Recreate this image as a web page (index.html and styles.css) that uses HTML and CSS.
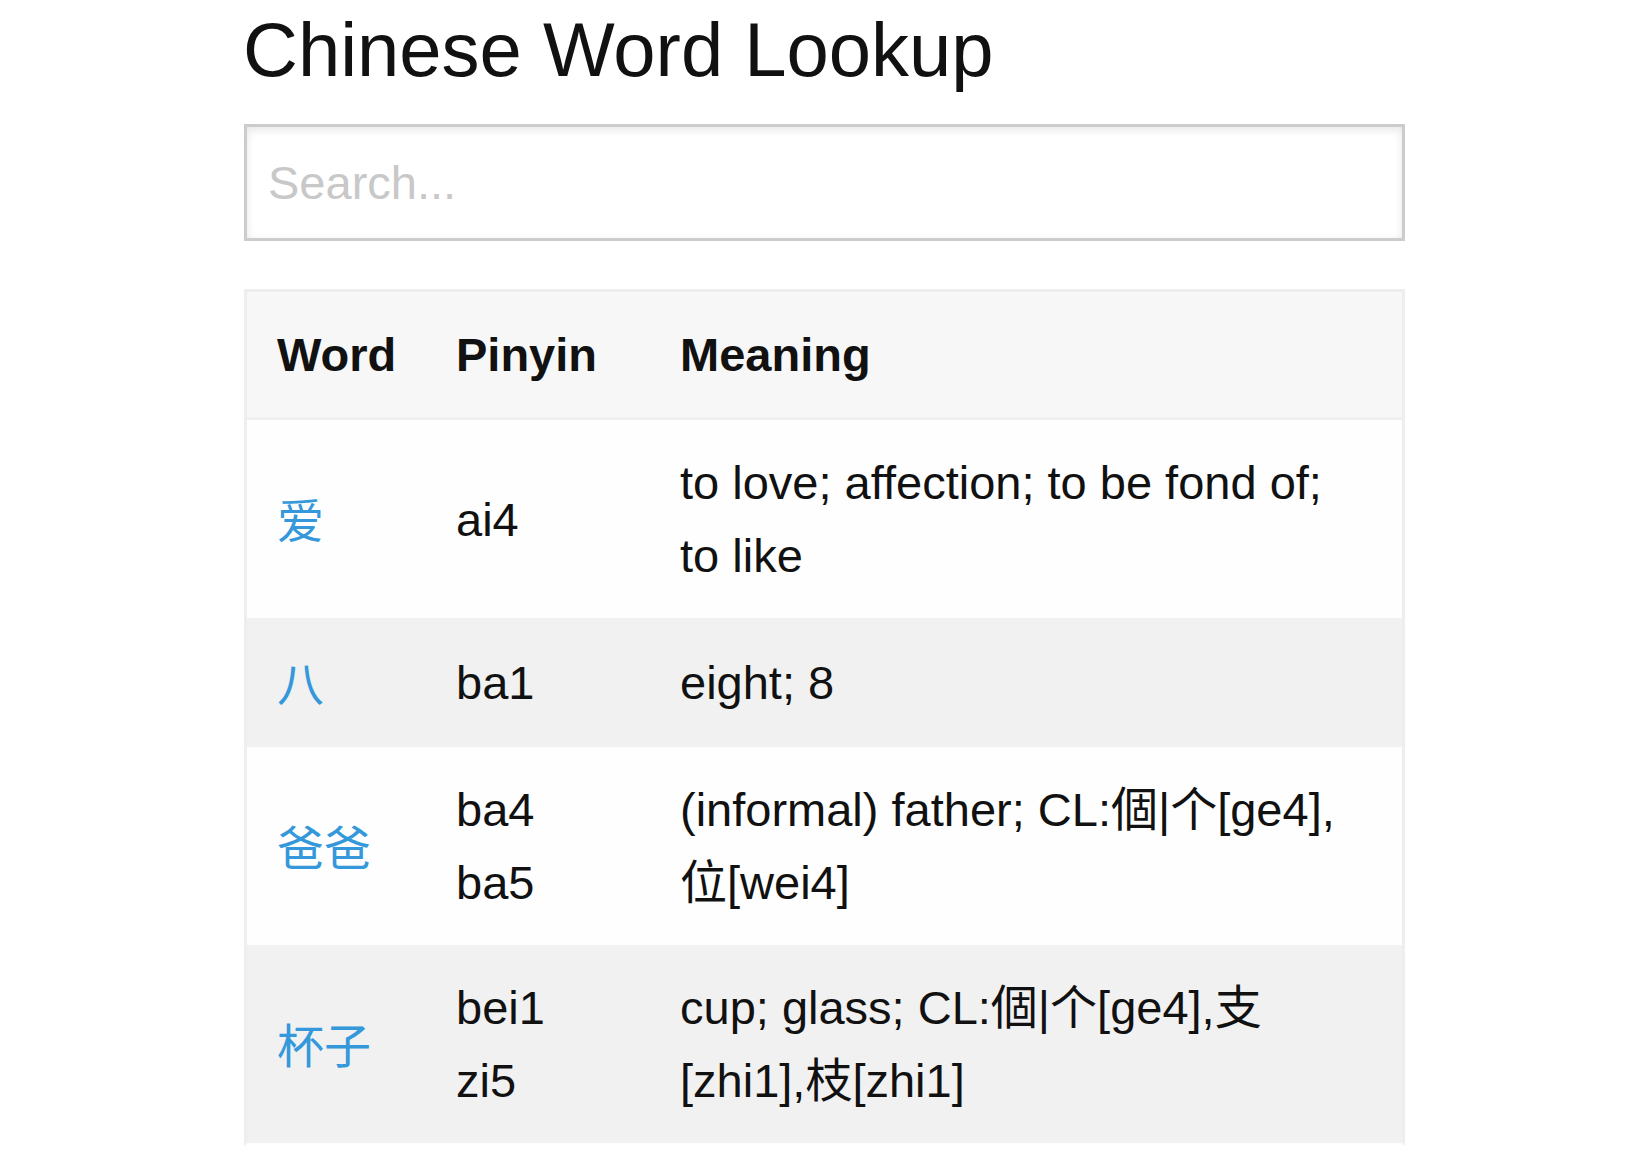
FILE: index.html
```html
<!DOCTYPE html>
<html lang="en">
<head>
<meta charset="utf-8">
<title>Chinese Word Lookup</title>
<link rel="stylesheet" href="styles.css">
</head>
<body>
<div class="page">
  <h1 class="title">Chinese Word Lookup</h1>
  <input class="search" type="text" placeholder="Search...">
  <table class="words">
    <colgroup>
      <col class="col-word">
      <col class="col-pinyin">
      <col class="col-meaning">
    </colgroup>
    <thead>
      <tr><th>Word</th><th>Pinyin</th><th class="meaning">Meaning</th></tr>
    </thead>
    <tbody>
      <tr>
        <td><a class="word" href="#">爱</a></td>
        <td><span class="syl">ai4</span></td>
        <td class="meaning">to love; affection; to be fond of; to like</td>
      </tr>
      <tr class="alt">
        <td><a class="word" href="#">八</a></td>
        <td><span class="syl">ba1</span></td>
        <td class="meaning">eight; 8</td>
      </tr>
      <tr>
        <td><a class="word" href="#">爸爸</a></td>
        <td><span class="syl">ba4</span><span class="syl">ba5</span></td>
        <td class="meaning">(informal) father; CL:個|个[ge4],位[wei4]</td>
      </tr>
      <tr class="alt">
        <td><a class="word" href="#">杯子</a></td>
        <td><span class="syl">bei1</span><span class="syl">zi5</span></td>
        <td class="meaning">cup; glass; CL:個|个[ge4],支[zhi1],枝[zhi1]</td>
      </tr>
    </tbody>
  </table>
</div>
</body>
</html>
```

FILE: styles.css
```css
html, body {
  margin: 0;
  padding: 0;
  background: #ffffff;
}

body {
  font-family: "Liberation Sans", Arial, "Noto Sans CJK SC", sans-serif;
  color: #111111;
}

.page {
  width: 1161px;
  margin-left: 244px;
  padding-top: 12px;
}

.title {
  margin: 0 0 36px -1px;
  font-size: 76px;
  line-height: 76px;
  font-weight: normal;
  color: #111111;
}

.search {
  display: block;
  box-sizing: border-box;
  width: 1161px;
  height: 117px;
  margin: 0;
  padding: 0 21px;
  border: 3px solid #cccccc;
  border-radius: 0;
  box-shadow: inset 0 3px 9px #e6e6e6;
  font-family: "Liberation Sans", Arial, sans-serif;
  font-size: 47px;
  color: #111111;
  outline: none;
}

.search::placeholder {
  color: #c8c8c8;
}

.words {
  margin-top: 48px;
  width: 1161px;
  border-collapse: separate;
  border-spacing: 0;
  border: 3px solid #eeeeee;
  border-bottom-color: #fefefe;
  table-layout: fixed;
  font-size: 47px;
  line-height: 73px;
}

.col-word { width: 179px; }
.col-pinyin { width: 224px; }
.col-meaning { width: 752px; }

.words th,
.words td {
  padding: 26px 30px;
  text-align: left;
  vertical-align: middle;
}

.words th {
  background: #f7f7f7;
  font-weight: bold;
  border-bottom: 3px solid #efefef;
}

.words .meaning {
  padding-right: 47px;
}

.words tbody tr {
  background: #fefefe;
}

.words tbody tr.alt {
  background: #f1f1f1;
}

.word {
  color: #3498db;
  text-decoration: none;
  font-family: "Noto Sans CJK SC", sans-serif;
  font-size: 47px;
}

.syl {
  display: block;
}
```
